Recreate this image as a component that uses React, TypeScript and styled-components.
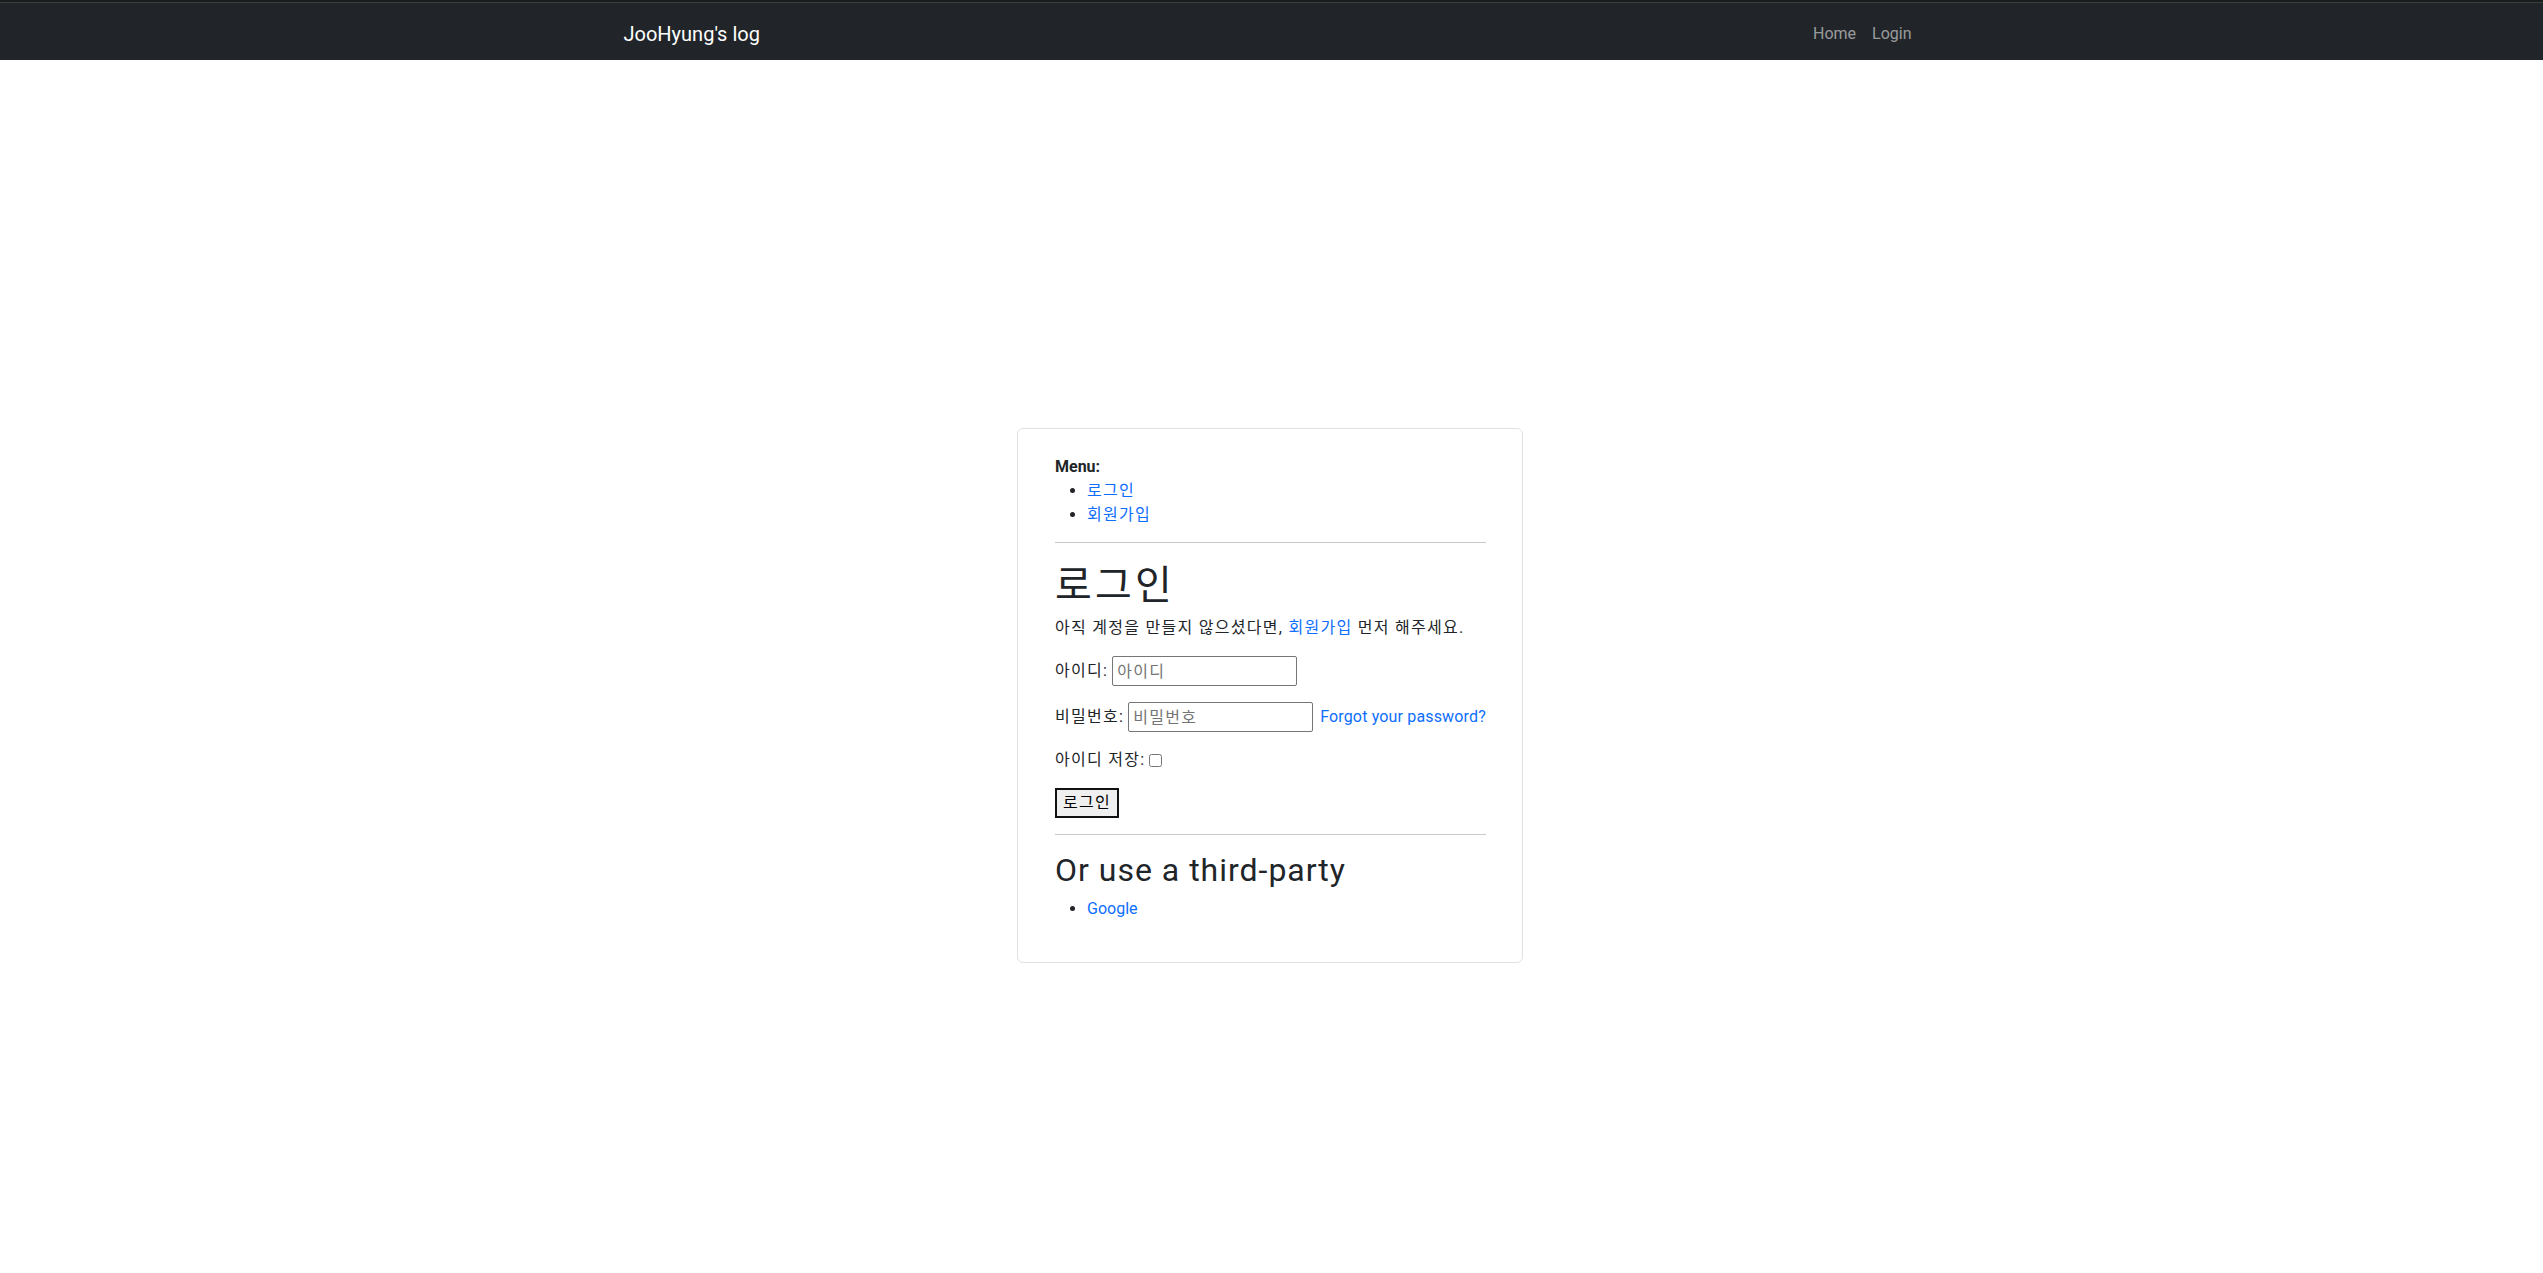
import React from "react";
import styled, { createGlobalStyle, css } from "styled-components";

const GlobalStyle = createGlobalStyle`
  html, body {
    margin: 0;
    padding: 0;
    background: #ffffff;
  }
  body {
    font-family: "Segoe UI", Roboto, "Noto Sans CJK KR", sans-serif;
    font-size: 16px;
    line-height: 1.5;
    color: #212529;
  }
  * { box-sizing: border-box; }
`;

const hangulSpacing = css`
  letter-spacing: 0.08em;
`;

const Page = styled.div`
  min-height: 1273px;
  display: flex;
  flex-direction: column;
`;

const Navbar = styled.nav`
  background: #212529;
  border-top: 2px solid #1b1c1d;
  box-shadow: inset 0 1px 0 #3a3b3c;
`;

const NavInner = styled.div`
  max-width: 1320px;
  margin: 0 auto;
  padding: 6px 12px 0;
  height: 58px;
  display: flex;
  align-items: center;
  justify-content: space-between;
`;

const Brand = styled.a`
  font-size: 20px;
  line-height: 30px;
  color: #ffffff;
  text-decoration: none;
`;

const NavLinks = styled.div`
  display: flex;
  align-items: center;
`;

const NavLink = styled.a`
  padding: 8px;
  font-size: 16px;
  line-height: 24px;
  color: rgba(255, 255, 255, 0.55);
  text-decoration: none;
`;

const Main = styled.main`
  display: flex;
  justify-content: center;
  padding: 368px 3px 0 0;
`;

const Card = styled.section`
  width: 506px;
  border: 1px solid #dee2e6;
  border-radius: 6px;
  padding: 26px 36px 25px 37px;
`;

const MenuTitle = styled.div`
  font-weight: 700;
  line-height: 24px;
`;

const BulletList = styled.ul<{ $bottom?: number }>`
  margin: 0 0 ${(p) => p.$bottom ?? 0}px;
  padding-left: 32px;
  list-style: disc;
  line-height: 24px;
`;

const Link = styled.a`
  color: #0d6efd;
  text-decoration: none;
`;

const MenuLink = styled(Link)`
  ${hangulSpacing}
`;

const Divider = styled.hr`
  border: 0;
  border-top: 1px solid #c8c9ca;
  margin: 15px 0 16px;
`;

const Title = styled.h1`
  font-size: 40px;
  font-weight: 400;
  line-height: 1.2;
  margin: 19px 0 6px;
  ${hangulSpacing}
`;

const Lead = styled.p`
  margin: 0 0 16px;
  line-height: 24px;
  white-space: nowrap;
  ${hangulSpacing}
`;

const FieldRow = styled.div`
  display: flex;
  align-items: center;
  gap: 4px;
  min-height: 24px;
  margin-bottom: 16px;
  white-space: nowrap;
  & > * {
    flex-shrink: 0;
  }
`;

const FieldLabel = styled.label`
  ${hangulSpacing}
`;

const TextInput = styled.input`
  width: 185px;
  height: 30px;
  padding: 1px 4px;
  border: 1px solid #767676;
  border-radius: 2px;
  font: inherit;
  color: #212529;
  ${hangulSpacing}
  &::placeholder {
    color: #757575;
  }
`;

const SideLink = styled(Link)`
  margin-left: 3px;
  letter-spacing: 0.01em;
`;

const Checkbox = styled.input`
  width: 13px;
  height: 13px;
  margin: 0;
`;

const SubmitButton = styled.button`
  height: 30px;
  padding: 0 6px;
  border: 2px solid #111111;
  border-radius: 0;
  background: #efefef;
  font: inherit;
  color: #000;
  cursor: pointer;
  ${hangulSpacing}
`;

const ButtonRow = styled.div`
  display: flex;
  margin-bottom: 16px;
`;

const SubTitle = styled.h2`
  font-size: 32px;
  font-weight: 400;
  line-height: 1.2;
  letter-spacing: 0.031em;
  margin: 0 0 8px;
`;

export default function App() {
  return (
    <Page>
      <GlobalStyle />
      <Navbar>
        <NavInner>
          <Brand href="#">JooHyung's log</Brand>
          <NavLinks>
            <NavLink href="#">Home</NavLink>
            <NavLink href="#">Login</NavLink>
          </NavLinks>
        </NavInner>
      </Navbar>
      <Main>
        <Card>
          <MenuTitle>Menu:</MenuTitle>
          <BulletList>
            <li><MenuLink href="#">로그인</MenuLink></li>
            <li><MenuLink href="#">회원가입</MenuLink></li>
          </BulletList>
          <Divider />
          <Title>로그인</Title>
          <Lead>
            아직 계정을 만들지 않으셨다면, <Link href="#">회원가입</Link> 먼저 해주세요.
          </Lead>
          <FieldRow>
            <FieldLabel htmlFor="username">아이디:</FieldLabel>
            <TextInput id="username" type="text" placeholder="아이디" />
          </FieldRow>
          <FieldRow>
            <FieldLabel htmlFor="password">비밀번호:</FieldLabel>
            <TextInput id="password" type="password" placeholder="비밀번호" />
            <SideLink href="#">Forgot your password?</SideLink>
          </FieldRow>
          <FieldRow>
            <FieldLabel htmlFor="remember">아이디 저장:</FieldLabel>
            <Checkbox id="remember" type="checkbox" />
          </FieldRow>
          <ButtonRow>
            <SubmitButton type="submit">로그인</SubmitButton>
          </ButtonRow>
          <Divider />
          <SubTitle>Or use a third-party</SubTitle>
          <BulletList $bottom={16}>
            <li><Link href="#">Google</Link></li>
          </BulletList>
        </Card>
      </Main>
    </Page>
  );
}
